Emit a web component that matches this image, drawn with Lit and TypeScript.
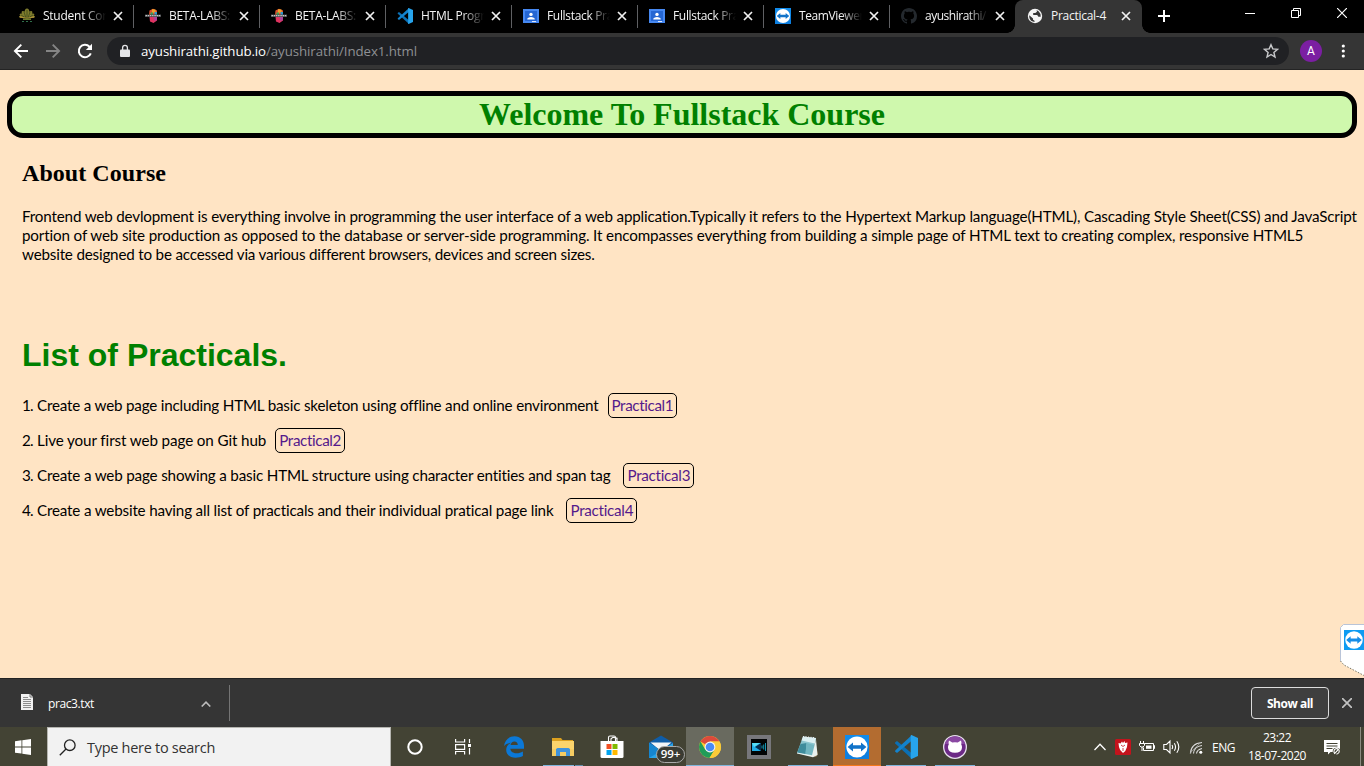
import { LitElement, html, svg, css } from "lit";
import { customElement, property } from "lit/decorators.js";

/** A single line of text whose tracking is adjusted to a given measure. */
@customElement("fit-text")
class FitText extends LitElement {
  @property({ type: Number }) w = 0;
  static styles = css`
    :host { display: inline-block; white-space: pre; flex: none; }
    .t { display: inline-block; }
  `;
  firstUpdated() {
    const el = this.renderRoot.querySelector(".t") as HTMLElement;
    const n = (this.textContent || "").length;
    const natural = el.getBoundingClientRect().width;
    if (n > 1 && this.w) {
      el.style.letterSpacing = (this.w - natural) / n + "px";
    }
  }
  render() {
    return html`<span class="t"><slot></slot></span>`;
  }
}

const teamviewer = svg`
  <rect width="24" height="24" fill="#0d7fe0"/>
  <rect width="24" height="12" fill="#1592f0" opacity=".6"/>
  <circle cx="12" cy="12" r="10.6" fill="#fff"/>
  <path d="M2.600 12 8 7.600v2.700h8V7.600l5.400 4.400L16 16.400v-2.700H8v2.700z" fill="#1173c9"/>`;

const vscode = svg`
  <path d="M1 7.600 3 6l15 12.500V24L1.200 8.600z" fill="#0b70b5"/>
  <path d="M1 16.400 3 18l15-12.500V0L1.200 15.400z" fill="#1383cd"/>
  <path d="M17.500 0 24 3v18l-6.500 3-.8-.5V.5z" fill="#27a4ec"/>`;

const octocat = "M8 0C3.58 0 0 3.58 0 8c0 3.54 2.29 6.53 5.47 7.59.4.07.55-.17.55-.38 0-.19-.01-.82-.01-1.49-2.01.37-2.53-.49-2.69-.94-.09-.23-.48-.94-.82-1.13-.28-.15-.68-.52-.01-.53.63-.01 1.08.58 1.23.82.72 1.21 1.87.87 2.33.66.07-.52.28-.87.51-1.07-1.78-.2-3.64-.89-3.64-3.95 0-.87.31-1.59.82-2.15-.08-.2-.36-1.02.08-2.12 0 0 .67-.21 2.2.82.64-.18 1.32-.27 2-.27s1.36.09 2 .27c1.53-1.04 2.2-.82 2.2-.82.44 1.1.16 1.920.08 2.120.51.56.82 1.270.82 2.150 0 3.070-1.870 3.750-3.650 3.950.29.25.54.73.54 1.480 0 1.070-.01 1.930-.01 2.200 0 .21.15.46.55.38A8.01 8.01 0 0 0 16 8c0-4.420-3.580-8-8-8z";

const favicons: Record<string, unknown> = {
  lotus: svg`<svg class="fav" viewBox="0 0 16 16">
    <path d="M8 .5c1.500 0 2.500 1.500 2.200 3C13 2 14 3.500 13 5.500c2.500-.5 3 1 1.500 2.500 1.500.3 1.500 1 .5 2H1c-1-1-1-1.700.5-2C0 6.500.5 5 3 5.500 2 3.500 3 2 5.800 3.500 5.500 2 6.500.5 8 .5z" fill="#7d7a2c"/>
    <path d="M8 2v8M5 4l2 6M11 4l-2 6M2 7l5 3M14 7l-5 3" stroke="#3d4a1b" stroke-width=".8"/>
    <path d="M.5 8.500q7.500 3.500 15 0" stroke="#b39238" fill="none" stroke-width="1.200"/>
    <path d="M4 10.500h8v1.500H4z" fill="#6c7a2c"/><path d="M3 13.500h2M7 13.500h2M11 13.500h2" stroke="#2f6f4a"/></svg>`,
  beta: svg`<svg class="fav" viewBox="0 0 16 16">
    <path d="M4.500 2.500 8 .8l4 1.700V7h-8z" fill="#e5532d"/><path d="M7 1.200 10.500 1.500v3L7 5z" fill="#f0a52c"/>
    <path d="M5.500 4.500H8V7H5.500z" fill="#37a05c"/><path d="M9.500 4H12v3H9.500z" fill="#2f9ad0"/>
    <path d="M4.500 9H12v3.500L8.500 15 5 13.500z" fill="#e0335f"/><path d="M8.500 9H12v3l-2.500 1z" fill="#a9429a"/>
    <path d="M0 6.500h16v2.500H0z" fill="#47484b"/><path d="M.5 7.700h15" stroke="#c4c4c4" stroke-width="1.200" stroke-dasharray="1.500 .7"/></svg>`,
  vscode: svg`<svg class="fav" viewBox="0 0 24 24">${vscode}</svg>`,
  classroom: svg`<svg class="fav" viewBox="0 0 16 16"><path d="M0 1h16v14H0z" fill="#4688f1"/><path d="M2 3h12v10H2z" fill="#2566d3"/>
    <circle cx="8" cy="6.400" r="1.700" fill="#fff"/><path d="M4.300 11.500V10.600Q5.500 9 8 9t3.700 1.600v.9z" fill="#fff"/><path d="M9 13h4v1H9z" fill="#dfe9fb"/></svg>`,
  teamviewer: svg`<svg class="fav" viewBox="0 0 24 24">${teamviewer}</svg>`,
  github: svg`<svg class="fav" viewBox="0 0 16 16"><path d=${octocat} fill="#24292e"/></svg>`,
  globe: svg`<svg class="fav" viewBox="0 0 16 16"><circle cx="8" cy="8" r="7.200" fill="#f4f4f4"/>
    <path d="M9.500 2.300 10 3.800 8.300 5H6.200v2h4l1.200 1.800h2.300q.3-3.300-1.900-5.300-1-.9-2.300-1.200z" fill="#353535"/>
    <path d="M2.300 7.200 6 10.500v1.300l1.500 1v1.100Q4 13.700 2.600 10.500 2 8.800 2.300 7.200z" fill="#353535"/></svg>`,
};

const tabs = [
  { icon: "lotus", text: "Student Cor", w: 64 },
  { icon: "beta", text: "BETA-LABS:", w: 61 },
  { icon: "beta", text: "BETA-LABS:", w: 61 },
  { icon: "vscode", text: "HTML Progr", w: 64 },
  { icon: "classroom", text: "Fullstack Pra", w: 66 },
  { icon: "classroom", text: "Fullstack Pra", w: 66 },
  { icon: "teamviewer", text: "TeamViewer", w: 65 },
  { icon: "github", text: "ayushirathi/", w: 61 },
  { icon: "globe", text: "Practical-4", w: 55, active: true },
];

const paragraph = [
  { w: 1335, text: "Frontend web devlopment is everything involve in programming the user interface of a web application.Typically it refers to the Hypertext Markup language(HTML), Cascading Style Sheet(CSS) and JavaScript" },
  { w: 1282, text: "portion of web site production as opposed to the database or server-side programming. It encompasses everything from building a simple page of HTML text to creating complex, responsive HTML5" },
  { w: 572, text: "website designed to be accessed via various different browsers, devices and screen sizes." },
];

const practicals = [
  { n: "1.", w: 561, gap: 9, text: "Create a web page including HTML basic skeleton using offline and online environment", link: "Practical1", lw: 62 },
  { n: "2.", w: 229, gap: 9, text: "Live your first web page on Git hub", link: "Practical2", lw: 62 },
  { n: "3.", w: 574, gap: 13, text: "Create a web page showing a basic HTML structure using character entities and span tag", link: "Practical3", lw: 63 },
  { n: "4.", w: 517, gap: 13, text: "Create a website having all list of practicals and their individual pratical page link", link: "Practical4", lw: 63 },
];

const apps = [
  { cls: "", icon: svg`<svg width="24" height="24" viewBox="0 0 24 24"><circle cx="12" cy="12" r="6.700" fill="none" stroke="#fff" stroke-width="2"/></svg>` },
  { cls: "view", icon: svg`<svg width="24" height="24" viewBox="0 0 24 24" fill="none" stroke="#fff" stroke-width="1.200"><path d="M4.600 4v3h9V4M4.600 19.500v-3h9v3M4.600 9.600h9v4.800h-9zM18.500 4v4M18.500 13v6.500"/><path d="M17 9h3v3h-3z" fill="#fff" stroke="none"/></svg>` },
  { cls: "", icon: svg`<svg width="24" height="24" viewBox="0 0 24 24"><path d="M2 11C2.700 5 7 1.200 12.500 1.200c6 0 9.500 4.300 9.500 9.500v3H8.300c.3 3 3 4.500 6.300 4.500 2.400 0 4.500-.7 6.300-1.800v4.700c-2 1-4.500 1.700-7.300 1.700C8 22.800 4.200 19.500 4.200 15c0-3.200 2-5.800 4.800-7.200C6 8 3.500 9 2 11zm6.500-1h7.300c0-2-1.200-3.600-3.500-3.600-2 0-3.400 1.500-3.800 3.600z" fill="#0b78d7"/></svg>` },
  { cls: "run multi", icon: svg`<svg width="24" height="24" viewBox="0 0 24 24"><path d="M1 3h9l1.500 2H22v4H1z" fill="#dca11f"/><path d="M1 6h22v15H1z" fill="#fbd46c"/><path d="M1 14h22v7H1z" fill="#f5cc62"/><path d="M5 21v-7l1.500-1h11l1.500 1v7h-4v-4H9v4z" fill="#3f93dc"/></svg>` },
  { cls: "", icon: svg`<svg width="24" height="24" viewBox="0 0 24 24"><path d="M8.500 6V2.500q0-1.500 1.500-1.500h4q1.500 0 1.500 1.500V6M11 6V3.800l2-1.500 4 1V6" fill="none" stroke="#fff" stroke-width="1.100"/><path d="M.5 6h23v15.500q0 1.500-1.500 1.500H2q-1.500 0-1.500-1.500z" fill="#fff"/><path d="M6.500 9h5v5h-5z" fill="#f25022"/><path d="M12.500 9h5v5h-5z" fill="#7fba00"/><path d="M6.500 15h5v5h-5z" fill="#00a4ef"/><path d="M12.500 15h5v5h-5z" fill="#ffb900"/></svg>` },
  { cls: "", badge: "99+", icon: svg`<svg width="24" height="24" viewBox="0 0 24 24"><path d="M0 7.500 12 .5l12 7V13H0z" fill="#0f5da7"/><path d="M1.500 7.500h21L12 16z" fill="#f2f5f8"/><path d="M0 8v15h24V8l-12 8z" fill="#29a4e8"/><path d="M0 8v15l12-7z" fill="#1686d0"/></svg>` },
  { cls: "run full focus", icon: svg`<svg width="24" height="24" viewBox="0 0 24 24"><circle cx="12" cy="12" r="11" fill="#fbc936"/><path d="M12 12 2.500 6.500A11 11 0 0 1 21.500 6.500H12z" fill="#dc4a3c"/><path d="M2.500 6.500A11 11 0 0 0 11.500 23L16.600 14.800 12 12 7.300 14.800z" fill="#219c59"/><path d="M12 6.500h9.500A11 11 0 0 1 11.500 23l5.200-8.300z" fill="#fbcb38"/><circle cx="12" cy="12" r="5.400" fill="#f5f5f5"/><circle cx="12" cy="12" r="4.300" fill="#4a8af4"/></svg>` },
  { cls: "", icon: svg`<svg width="24" height="24" viewBox="0 0 24 24"><path d="M0 0h24v24H0z" fill="#77777b"/><path d="M4 4h16v16H4z" fill="#020405"/><path d="M5 8h9v8H5z" fill="#20aee8"/><path d="M8 12l6-4v8z" fill="#062c4c"/><path d="M5 8h8l-6 4z" fill="#57dcf4"/><path d="M15 10.500v3M16.700 9.500v5M18.500 8v8" stroke="#18a5c5" stroke-width=".9"/></svg>` },
  { cls: "run", icon: svg`<svg width="24" height="24" viewBox="0 0 24 24"><path d="M18 3l4 16-2 3-4-1z" fill="#8d764f"/><path d="M7 1.500 20 3l-3.500 18.500L1 18z" fill="#8cc5cf"/><path d="M7 1.500 20 3l-1 5.500-13.500-3z" fill="#dbf0f2"/><path d="M4.500 9l6-1-1 11.500L1 18z" fill="#3f8c9c"/><path d="M10.500 8l8 2-2 11-7-1.500z" fill="#72b6c1"/><path d="M1 17.500l15 2.800 4-15.800 1.500 15.500-4.500 2.200-16-3.700z" fill="#e9f1ef"/><path d="M7.500 1v1.500M10 1.200v1.500M12.500 1.500V3M15 1.800v1.500M17.500 2v1.500" stroke="#e9e9e9"/></svg>` },
  { cls: "run full alert", icon: svg`<svg width="24" height="24" viewBox="0 0 24 24">${teamviewer}</svg>` },
  { cls: "run", icon: svg`<svg width="24" height="24" viewBox="0 0 24 24">${vscode}</svg>` },
  { cls: "run", icon: svg`<svg width="24" height="24" viewBox="0 0 24 24"><circle cx="12" cy="12" r="12" fill="#e8e0ed"/><circle cx="12" cy="12" r="10.700" fill="#6c2a86"/><path d="M1.800 9a10.700 10.700 0 0 1 20.400 0z" fill="#8a48a2"/><path d="M6 5.500l3.300 1.900q2.700-.5 5.400 0L18 5.500q.8 2 .2 3.800 1 1.500.8 3.500-.4 5-7 5t-7-5Q4.800 10.800 5.800 9.300 5.200 7.500 6 5.500z" fill="#fff"/></svg>` },
];

@customElement("app-root")
class AppRoot extends LitElement {
  static styles = css`
    :host { display: flex; flex-direction: column; width: 1364px; height: 766px; overflow: hidden;
      font-family: "Open Sans", "Noto Sans", sans-serif; position: relative; }
    * { box-sizing: border-box; }
    svg { display: block; flex: none; }
    .tabs { height: 33px; background: #000; display: flex; padding-left: 8px; flex: none; }
    .tab { width: 126px; height: 33px; display: flex; align-items: center; padding: 0 0 1px 11px; color: #f4f4f4; font-size: 12px; border-right: 1px solid transparent;
      border-image: linear-gradient(#000 6px, #5f6063 6px, #5f6063 27px, #000 27px) 1; }
    .tab.before { border-image: none; }
    .tab.active { border: 0; background: #353535; border-radius: 8px 8px 0 0; width: 127px; margin-left: -1px; padding-left: 12px; position: relative; }
    .tab.active::before, .tab.active::after { content: ""; position: absolute; bottom: 0; width: 8px; height: 8px; }
    .tab.active::before { left: -8px; background: radial-gradient(circle at 0 0, transparent 7.500px, #353535 8px); }
    .tab.active::after { right: -8px; background: radial-gradient(circle at 100% 0, transparent 7.500px, #353535 8px); }
    .fav { width: 16px; height: 16px; margin-right: 8px; }
    .label { width: 67px; line-height: 18px; margin-right: 3px; white-space: nowrap;
      -webkit-mask-image: linear-gradient(90deg, #000 62%, transparent 94%); mask-image: linear-gradient(90deg, #000 62%, transparent 94%); }
    .active .label { -webkit-mask-image: none; mask-image: none; }
    .new { width: 44px; display: flex; align-items: center; justify-content: center; padding-bottom: 1px; }
    .wins { margin-left: auto; display: flex; height: 27px; align-items: center; margin-right: -1px; }
    .wins > span { width: 46px; display: flex; justify-content: center; padding-bottom: 1px; }
    .toolbar { height: 37px; flex: none; background: #353535; border-bottom: 1px solid #242424; display: flex; align-items: center; padding: 0 0 0 13px; }
    .nav { display: flex; gap: 16px; margin-right: 14px; }
    .url { width: 1182px; height: 28px; border-radius: 14px; background: #202124; display: flex; align-items: center; padding: 0 10px 0 12px; font-size: 13.300px; color: #8e9093; }
    .url .host { color: #fff; }
    .lock { margin-right: 10px; }
    .star { margin-left: auto; }
    .avatar { width: 22px; height: 22px; border-radius: 50%; background: #7b1fa2; color: #fff; font: 12px/22px Roboto, sans-serif; text-align: center; margin: 0 17px 0 11px; }
    .page { flex: 1; min-height: 0; background: #ffe4c4; color: #000; padding: 21px 7px 0; position: relative; font: 15.200px/19px Lato, sans-serif; }
    .welcome { height: 47px; border: 5px solid #000; border-radius: 16px; background: #cff8ad; color: #008000; text-align: center; margin: 0; font: bold 32px/37px "Liberation Serif", serif; }
    .body { padding-left: 15px; }
    .about { margin: 21px 0 0; font: bold 24px/28px "Liberation Serif", serif; }
    .para { margin: 20px 0 0; display: flex; flex-direction: column; }
    .list { margin: 73px 0 0; font: bold 32px/36px "Liberation Sans", sans-serif; color: #008000; }
    .items { display: flex; flex-direction: column; gap: 10px; margin-top: 20px; }
    .item { display: flex; align-items: center; height: 25px; }
    .num { width: 15px; }
    .num fit-text { display: block; }
    .link { border: 1px solid #000; border-radius: 5px; height: 25px; padding: 0 3px; line-height: 23px; color: #551a8b; text-decoration: none; }
    .side { position: absolute; left: 1340px; top: 554px; }
    .dl { height: 49px; flex: none; background: #353535; border-top: 1px solid #222; display: flex; align-items: center; color: #fff; font-size: 12px; padding-left: 21px; padding-top: 1px; }
    .dl .doc { margin-bottom: 3px; }
    .dl .name { margin-left: 15px; width: 153px; }
    .dl .sep { width: 1px; height: 36px; background: #747474; margin-left: 18px; margin-bottom: 2px; }
    .all { margin-left: auto; width: 78px; height: 32px; border: 1px solid #dcdcdc; border-radius: 4px; background: #3f3f3f; display: flex; align-items: center; justify-content: center; font-weight: 700; margin: 0 13px 1px auto; }
    .dl .x { margin-right: 12px; padding-bottom: 2px; }
    .task { height: 39px; flex: none; background: #434334; display: flex; align-items: stretch; }
    .start { width: 47px; display: flex; align-items: center; justify-content: center; padding-right: 1px; }
    .search { width: 344px; background: #f2f2f2; border: 1px solid #b5b5b0; border-bottom: 0; display: flex; align-items: center; color: #333; font-size: 14.500px; padding: 1px 0 0 11px; gap: 11px; }
    .apps { display: flex; gap: 1px; }
    .app { width: 48px; display: flex; align-items: center; justify-content: center; position: relative; padding-top: 1px; }
    .app.view { padding-right: 3px; margin-right: 1px; }
    .app.run::after { content: ""; position: absolute; left: 4px; right: 4px; bottom: 0; height: 1px; background: #7fb5dc; }
    .app.full::after { left: 0; right: 0; }
    .app.multi::after { background: linear-gradient(90deg, #7fb5dc 31px, #32342c 31px, #32342c 32px, #6390ae 32px); }
    .app.focus { background: #696a5f; }
    .app.alert { background: #b36c30; }
    .app.alert::after { background: #f5781b; }
    .badge { position: absolute; left: 19px; top: 19px; width: 29px; height: 17px; border: 1px solid #aaa; border-radius: 9px; background: #3a3b33; color: #fff; font-size: 11.500px; line-height: 14px; font-weight: 600; text-align: center; }
    .tray { margin-left: auto; display: flex; align-items: center; color: #fff; font-size: 12px; padding-top: 1px; }
    .tray > svg { margin-right: 8px; }
    .clock { display: flex; flex-direction: column; align-items: center; line-height: 18px; width: 60px; margin: 0 17px 0 12px; }
    .edge { width: 1px; height: 39px; background: #8b8b80; margin: -1px 3px 0 11px; }
  `;

  cross(c = "#f1f1f1", s = 8) {
    return svg`<svg width="10" height="10" viewBox="0 0 10 10"><path d=${s === 8 ? "M1 1l8 8M9 1l-8 8" : "M0 0l10 10M10 0l-10 10"} stroke=${c} stroke-width="1.700" fill="none"/></svg>`;
  }

  render() {
    return html`
      <div class="tabs">
        ${tabs.map((t, i) => html`<div class="tab ${t.active ? "active" : i === 7 ? "before" : ""}">
          ${favicons[t.icon]}<span class="label"><fit-text w=${t.w}>${t.text}</fit-text></span>${this.cross()}
        </div>`)}
        <div class="new"><svg width="12" height="12" viewBox="0 0 12 12"><path d="M6 0v12M0 6h12" stroke="#fff" stroke-width="2"/></svg></div>
        <div class="wins">
          <span><svg width="10" height="10"><path d="M0 5.500h10" stroke="#fff"/></svg></span>
          <span><svg width="10" height="10" fill="none" stroke="#fff"><path d="M.5 2.500h7v7h-7zM2.500 2.500v-2h7v7h-2"/></svg></span>
          <span><svg width="10" height="10"><path d="M0 0l10 10M10 0L0 10" stroke="#fff" stroke-width="1.200"/></svg></span>
        </div>
      </div>
      <div class="toolbar">
        <div class="nav">
          <svg width="16" height="16" viewBox="0 0 16 16" fill="none" stroke="#fff" stroke-width="1.900"><path d="M15 8H2M8.300 1.600 1.900 8l6.400 6.400"/></svg>
          <svg width="16" height="16" viewBox="0 0 16 16" fill="none" stroke="#858585" stroke-width="1.900"><path d="M1 8h13M7.700 1.600 14.100 8l-6.400 6.400"/></svg>
          <svg width="16" height="16" viewBox="0 0 16 16" fill="none" stroke="#fff" stroke-width="2"><path d="M13.800 10.300A6.200 6.200 0 1 1 12.500 3.700L14 5.200"/><path d="M15 .8V7H8.800z" fill="#fff" stroke="none"/></svg>
        </div>
        <div class="url">
          <svg class="lock" width="12" height="14" viewBox="0 0 12 14"><path d="M2 5.500h8q1 0 1 1V12q0 1-1 1H2q-1 0-1-1V6.500q0-1 1-1z" fill="#e4e5e7"/><path d="M3.600 6V3.800a2.400 2.400 0 0 1 4.800 0V6" fill="none" stroke="#e4e5e7" stroke-width="1.300"/></svg>
          <fit-text class="host" w="125">ayushirathi.github.io</fit-text><fit-text w="151">/ayushirathi/Index1.html</fit-text>
          <svg class="star" width="16" height="16" viewBox="0 0 16 16"><path d="M8 1.700l1.800 4.200 4.700.4-3.600 3.100 1.100 4.600L8 11.500 4 14l1.100-4.600L1.500 6.300l4.700-.4z" fill="none" stroke="#c8c9cb" stroke-width="1.400"/></svg>
        </div>
        <div class="avatar">A</div>
        <svg width="8" height="16" viewBox="0 0 8 16" fill="#fff"><circle cx="4.300" cy="3" r="1.600"/><circle cx="4.300" cy="8" r="1.600"/><circle cx="4.300" cy="13" r="1.600"/></svg>
      </div>

      <main class="page">
        <h1 class="welcome"><fit-text w="406">Welcome To Fullstack Course</fit-text></h1>
        <div class="body">
          <h2 class="about"><fit-text w="144">About Course</fit-text></h2>
          <p class="para">${paragraph.map((l) => html`<fit-text w=${l.w}>${l.text}</fit-text>`)}</p>
          <h1 class="list"><fit-text w="265">List of Practicals.</fit-text></h1>
          <div class="items">
            ${practicals.map((p) => html`<div class="item">
              <span class="num"><fit-text w="11">${p.n}</fit-text></span><fit-text w=${p.w}>${p.text}</fit-text>
              <a class="link" style="margin-left:${p.gap}px"><fit-text w=${p.lw}>${p.link}</fit-text></a>
            </div>`)}
          </div>
        </div>
        <svg class="side" width="24" height="52" viewBox="0 0 24 52"><path d="M24 .5H3.500L.5 3.500V37L4 41l20 10.500z" fill="#fff"/><path d="M24 .5H3.500L.5 3.500V37" fill="none" stroke="#b9c4d8"/><path d="M.5 37 4 41l20 10.500" fill="none" stroke="#776" stroke-dasharray="1.500 1.500"/>
          <g transform="translate(4 6) scale(.833)"><rect width="25" height="24" fill="#0e9bf2"/><circle cx="12" cy="12" r="10.500" fill="#fff"/><path d="M2.600 12 8 7.600v2.700h8V7.600l5.400 4.400L16 16.400v-2.700H8v2.700z" fill="#168de8"/></g></svg>
      </main>

      <div class="dl">
        <svg class="doc" width="12" height="16" viewBox="0 0 12 16"><path d="M0 0h9l3 3v13H0z" fill="#f1f1f1"/><path d="M9 0v3h3" fill="none" stroke="#777"/><path d="M2 3.500h5M2 5.500h8M2 7.500h8M2 9.500h8M2 11.500h8M2 13.500h8" stroke="#8c8c8c"/></svg>
        <span class="name"><fit-text w="46">prac3.txt</fit-text></span>
        <svg width="10" height="6" viewBox="0 0 10 6"><path d="M.7 5.500 5 1.200l4.300 4.300" fill="none" stroke="#bcbcbc" stroke-width="1.600"/></svg>
        <span class="sep"></span>
        <span class="all"><fit-text w="46">Show all</fit-text></span>
        <span class="x">${this.cross("#c2c2c2", 10)}</span>
      </div>

      <div class="task">
        <div class="start"><svg width="16" height="16" viewBox="0 0 16 16" fill="#fff"><path d="M0 2.200 6.500 1.300v6.200H0zM7.300 1.200 16 0v7.500H7.300zM0 8.400h6.500v6.200L0 13.700zM7.300 8.400H16V16l-8.700-1.200z"/></svg></div>
        <div class="search">
          <svg width="17" height="17" viewBox="0 0 17 17" fill="none" stroke="#222" stroke-width="1.300"><circle cx="10.800" cy="6.200" r="5.300"/><path d="M7 10 .8 16.200"/></svg>
          <fit-text w="128">Type here to search</fit-text>
        </div>
        <div class="apps">${apps.map((a) => html`<div class="app ${a.cls}">${a.icon}${a.badge ? html`<span class="badge">${a.badge}</span>` : ""}</div>`)}</div>
        <div class="tray">
          <svg width="14" height="16" viewBox="0 0 14 16"><path d="M1.500 11 7 5.300l5.500 5.700" fill="none" stroke="#fff" stroke-width="1.300"/></svg>
          <svg width="16" height="16" viewBox="0 0 16 16"><rect width="16" height="16" rx="1.500" fill="#c3131c"/><path d="M3.500 4l2 .5L7 2.500l1 1.500L9.500 2l.5 2 2.500-.5-.5 4.500Q11 12 8 14 4.500 11.500 4 8z" fill="#fff"/><path d="M6 6l2 1.500L10 6M8 9v3" stroke="#c3131c" fill="none" stroke-width=".8"/></svg>
          <svg width="16" height="16" viewBox="0 0 16 16" fill="none" stroke="#fff"><path d="M5.500 4.500h9v7h-10v-3M14.500 6.500h1v3h-1M1.500 2v2.500M4.500 2v2.500M.5 4.500h5v2L4 8H2L.5 6.500zM3 8v4"/><path d="M7 6.500h5.500v3.300H7z" fill="#fff" stroke="none"/></svg>
          <svg width="18" height="16" viewBox="0 0 18 16" fill="none" stroke="#fff" stroke-width="1.100"><path d="M.8 5.500h2.700l3.500-3.500v12l-3.500-3.500H.8zM9 6q1.300 2 0 4M11.300 4.200q2.500 3.800 0 7.600M13.800 2.300q4 5.700 0 11.400"/></svg>
          <svg width="15" height="16" viewBox="0 0 15 16" fill="none" stroke="#dedede" stroke-width="1.100"><path d="M1.500 14.500Q1.800 4.500 13 3.500M4.500 14.500Q5 7.500 13 6.500M7.500 14.500Q8 10.500 13 9.500"/><path d="M.8 14 12 3.200" stroke="#aaa" stroke-width=".7"/><circle cx="11.800" cy="13.200" r="1.500" fill="#fff" stroke="none"/></svg>
          <fit-text w="23">ENG</fit-text>
          <div class="clock"><fit-text w="28">23:22</fit-text><fit-text w="58">18-07-2020</fit-text></div>
          <svg width="17" height="17" viewBox="0 0 17 17"><path d="M0 1h16v9.500H9.500V13H6.500L4 15.500V13H0z" fill="#fff"/><path d="M2.500 4.500h11M2.500 7h11M2.500 9.500h6" stroke="#434334"/><circle cx="12.500" cy="12.500" r="3.800" fill="#434334"/><path d="M10 12a2.800 2.800 0 0 1 4.500-1.800L10.700 14.500A2.800 2.800 0 0 1 10 12zM15 11q1 3-2.500 4.300" fill="none" stroke="#fff" stroke-width="1.100"/></svg>
          <span class="edge"></span>
        </div>
      </div>
    `;
  }
}
